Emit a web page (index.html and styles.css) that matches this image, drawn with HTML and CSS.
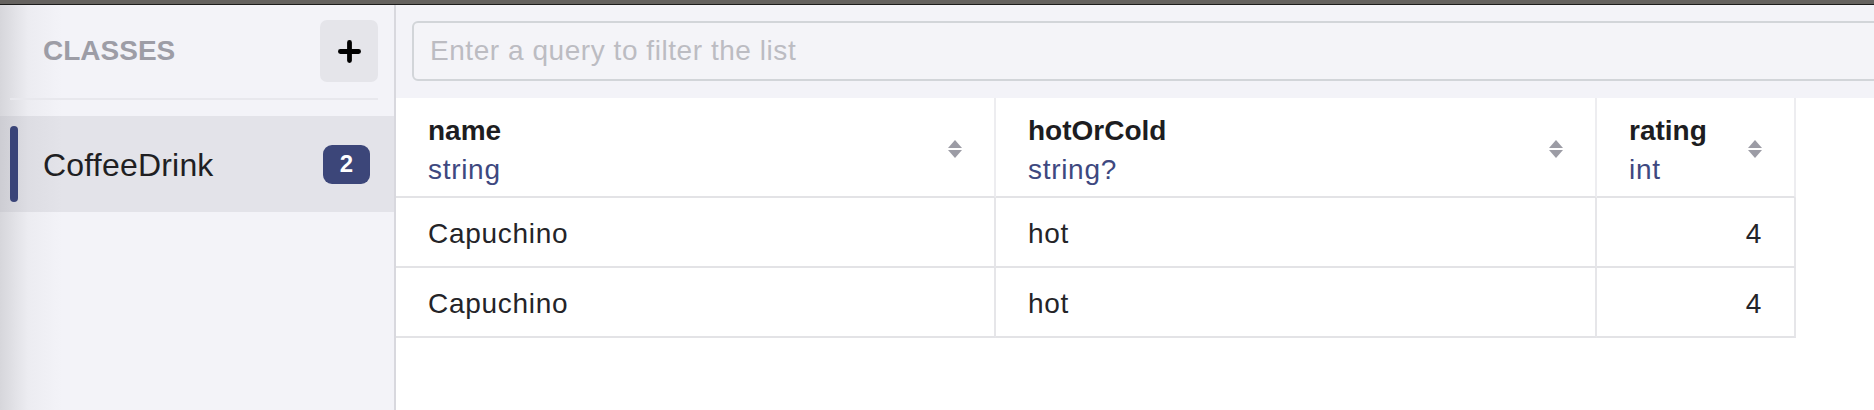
FILE: index.html
```html
<!DOCTYPE html>
<html lang="en">
<head>
<meta charset="utf-8">
<title>Realm Studio - Classes</title>
<link rel="stylesheet" href="styles.css">
</head>
<body>
<div class="topbar"></div>
<div class="app">
  <aside class="sidebar">
    <div class="sidebar-head">
      <span class="sidebar-title">CLASSES</span>
      <button class="add-btn" type="button" aria-label="Add class">
        <svg width="23" height="23" viewBox="0 0 24 24"><path d="M12 2.5v19M2.5 12h19" stroke="#000" stroke-width="5" stroke-linecap="round" fill="none"/></svg>
      </button>
    </div>
    <div class="sidebar-sep"></div>
    <ul class="class-list">
      <li class="class-item selected">
        <span class="indicator"></span>
        <span class="class-name">CoffeeDrink</span>
        <span class="badge">2</span>
      </li>
    </ul>
  </aside>
  <main class="content">
    <div class="toolbar">
      <input class="search" type="text" placeholder="Enter a query to filter the list">
    </div>
    <div class="grid">
      <div class="cell head col1">
        <div class="head-text"><span class="col-name">name</span><span class="col-type">string</span></div>
        <svg class="sort" width="14" height="18" viewBox="0 0 14 18"><path d="M0 8L7 0L14 8Z M0 10H14L7 18Z" fill="#9c9ca5"/></svg>
      </div>
      <div class="cell head col2">
        <div class="head-text"><span class="col-name">hotOrCold</span><span class="col-type">string?</span></div>
        <svg class="sort" width="14" height="18" viewBox="0 0 14 18"><path d="M0 8L7 0L14 8Z M0 10H14L7 18Z" fill="#9c9ca5"/></svg>
      </div>
      <div class="cell head col3">
        <div class="head-text"><span class="col-name">rating</span><span class="col-type">int</span></div>
        <svg class="sort" width="14" height="18" viewBox="0 0 14 18"><path d="M0 8L7 0L14 8Z M0 10H14L7 18Z" fill="#9c9ca5"/></svg>
      </div>

      <div class="cell body">Capuchino</div>
      <div class="cell body">hot</div>
      <div class="cell body num">4</div>

      <div class="cell body">Capuchino</div>
      <div class="cell body">hot</div>
      <div class="cell body num">4</div>
    </div>
  </main>
</div>
</body>
</html>
```

FILE: styles.css
```css
* { box-sizing: border-box; }

html, body {
  margin: 0;
  padding: 0;
  background: #ffffff;
  font-family: "Liberation Sans", Arial, sans-serif;
  overflow: hidden;
}

.topbar {
  height: 5px;
  background: #65625f;
  border-bottom: 1px solid #1b1b1b;
}

.app {
  display: flex;
  height: 405px;
}

/* Sidebar */
.sidebar {
  width: 396px;
  flex: none;
  border-right: 2px solid #d8d8de;
  background: linear-gradient(to right, #d6d6db 0px, #ececf1 28px, #f3f3f8 62px);
  display: flex;
  flex-direction: column;
}

.sidebar-head {
  display: flex;
  align-items: center;
  justify-content: space-between;
  padding: 15px 16px 0 43px;
}

.sidebar-title {
  font-size: 28px;
  font-weight: 700;
  color: #9d9da6;
}

.add-btn {
  width: 58px;
  height: 62px;
  border: none;
  border-radius: 7px;
  background: #e5e5ea;
  display: flex;
  align-items: center;
  justify-content: center;
  padding: 0;
}

.sidebar-sep {
  height: 2px;
  background: #e8e8ed;
  margin: 16px 16px 0 10px;
}

.class-list {
  list-style: none;
  margin: 16px 0 0;
  padding: 0;
}

.class-item {
  display: flex;
  align-items: center;
  height: 96px;
  padding: 10px 24px 10px 10px;
}

.class-item.selected {
  background: linear-gradient(to right, #cdcdd3 0px, #dddde3 28px, #e3e3e9 62px);
}

.indicator {
  width: 8px;
  align-self: stretch;
  border-radius: 4px;
  background: #3a4478;
}

.class-name {
  flex: 1;
  margin-left: 25px;
  margin-top: 2px;
  font-size: 32px;
  letter-spacing: 0.2px;
  color: #1f1f23;
}

.badge {
  height: 39px;
  min-width: 47px;
  padding: 0 16px;
  border-radius: 9px;
  background: #3c4679;
  color: #ffffff;
  font-size: 24px;
  font-weight: 700;
  display: flex;
  align-items: center;
  justify-content: center;
}

/* Main content */
.content {
  flex: 1;
  min-width: 0;
  display: flex;
  flex-direction: column;
  overflow: hidden;
}

.toolbar {
  height: 93px;
  flex: none;
  background: #f3f3f8;
  padding: 16px 0 0 16px;
  overflow: hidden;
}

.search {
  display: block;
  width: calc(100% + 60px);
  height: 60px;
  border: 2px solid #d2d5d9;
  border-radius: 6px;
  background: #f4f4f8;
  padding: 0 16px;
  font-family: "Liberation Sans", Arial, sans-serif;
  font-size: 28px;
  letter-spacing: 0.55px;
  color: #222;
  outline: none;
}

.search::placeholder {
  color: #bcbcc2;
}

.grid {
  display: grid;
  grid-template-columns: 600px 601px 199px;
  grid-auto-rows: 70px;
  grid-template-rows: 100px;
}

.cell {
  border-right: 2px solid #e6e6e9;
  border-bottom: 2px solid #e3e3e6;
  display: flex;
  align-items: center;
  padding: 0 32px;
}

.cell.head {
  justify-content: space-between;
  padding-top: 12px;
  padding-bottom: 8px;
  border-right-color: #ededf0;
}

.head-text {
  display: flex;
  flex-direction: column;
  margin-top: 2px;
  line-height: 39px;
  font-size: 28px;
}

.col-name {
  font-weight: 700;
  color: #1d1d21;
}

.col-type {
  color: #3e4880;
  letter-spacing: 0.7px;
}

.sort {
  flex: none;
}

.cell.body {
  padding-top: 4px;
  font-size: 28px;
  letter-spacing: 0.7px;
  color: #242428;
}

.cell.num {
  justify-content: flex-end;
}
```
